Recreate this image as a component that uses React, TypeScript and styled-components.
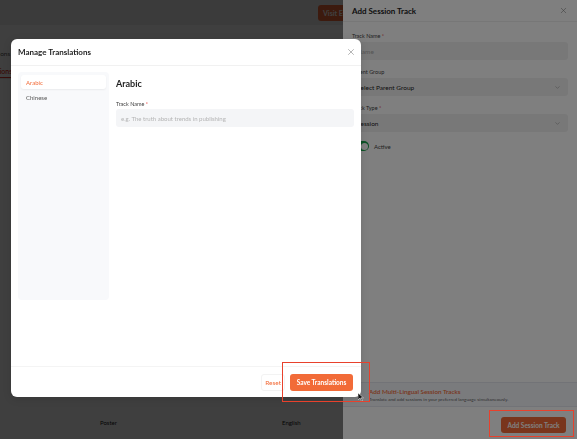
import React from 'react';
import styled, { createGlobalStyle } from 'styled-components';
import { X, ChevronDown } from 'lucide-react';

const ACCENT = '#f26b38';

const GlobalStyle = createGlobalStyle`
    html, body {
        margin: 0;
        padding: 0;
        width: 577px;
        height: 439px;
        overflow: hidden;
        font-family: Lato, "Open Sans", sans-serif;
        color: #222;
    }
    * {
        box-sizing: border-box;
    }
`;

/* ---------- page behind everything ---------- */

const Page = styled.div`
    display: flex;
    flex-direction: column;
    width: 577px;
    height: 439px;
    background: #ffffff;
`;

const TopBar = styled.div`
    display: flex;
    align-items: center;
    justify-content: flex-end;
    height: 25px;
    padding-right: 209px;
    background: #ececec;
`;

const VisitButton = styled.button`
    width: 50px;
    height: 16px;
    padding: 0 0 0 5px;
    border: none;
    border-radius: 3px;
    background: ${ACCENT};
    color: #fff;
    font-family: inherit;
    font-size: 7px;
    font-weight: 700;
    text-align: left;
    white-space: nowrap;
    overflow: hidden;
`;

const PageBody = styled.div`
    display: flex;
    flex-direction: column;
    flex: 1;
`;

const Crumb = styled.div`
    margin: 25px 0 0 -14px;
    font-size: 6.5px;
    color: #555;
`;

const Tabs = styled.div`
    display: flex;
    margin-top: 10px;
    border-bottom: 1px solid #e4e4e4;
`;

const Tab = styled.div<{ $active?: boolean }>`
    margin-left: -14px;
    padding-bottom: 2px;
    font-size: 7px;
    font-weight: 600;
    color: ${({ $active }) => ($active ? '#e23b2e' : '#666')};
    border-bottom: 1px solid ${({ $active }) => ($active ? '#e23b2e' : 'transparent')};
`;

const TableRow = styled.div`
    display: grid;
    grid-template-columns: 182px 1fr;
    align-items: center;
    height: 22px;
    margin: auto 0 6px;
    padding-left: 100px;
    font-size: 6px;
    color: #111;
`;

/* ---------- masks ---------- */

const Mask = styled.div<{ $z: number }>`
    position: fixed;
    inset: 0;
    z-index: ${({ $z }) => $z};
    background: rgba(0, 0, 0, 0.5);
`;

/* ---------- drawer ---------- */

const Drawer = styled.aside`
    position: fixed;
    top: 0;
    right: 0;
    z-index: 2;
    display: flex;
    flex-direction: column;
    width: 234px;
    height: 439px;
    background: #fff;
`;

const DrawerHeader = styled.div`
    display: flex;
    align-items: center;
    justify-content: space-between;
    height: 22px;
    padding: 0 9px;
    border-bottom: 1px solid #eeeeee;
`;

const DrawerTitle = styled.h2`
    margin: 0;
    font-size: 8px;
    font-weight: 700;
    color: #222;
`;

const CloseButton = styled.button`
    display: flex;
    padding: 0;
    border: none;
    background: transparent;
    color: #777;
`;

const DrawerBody = styled.div`
    display: flex;
    flex-direction: column;
    flex: 1;
    padding: 10px 9px 0;
`;

const Field = styled.div`
    display: flex;
    flex-direction: column;
    gap: 2px;
    margin-bottom: 8px;
`;

const Label = styled.label`
    height: 8px;
    line-height: 8px;
    font-size: 5.5px;
    color: #444;
`;

const Req = styled.span`
    color: #e53935;
`;

const DrawerInput = styled.div<{ $placeholder?: boolean }>`
    display: flex;
    align-items: center;
    justify-content: space-between;
    height: 18px;
    padding: 0 7px 0 5px;
    border-radius: 3px;
    background: #f1f1f1;
    font-size: 6.5px;
    color: ${({ $placeholder }) => ($placeholder ? '#aaa' : '#222')};
`;

const SwitchRow = styled.div`
    display: flex;
    align-items: center;
    gap: 5px;
    height: 10px;
    margin-top: 1px;
    font-size: 6px;
    color: #444;
`;

const Switch = styled.div<{ $on?: boolean }>`
    display: flex;
    align-items: center;
    justify-content: ${({ $on }) => ($on ? 'flex-end' : 'flex-start')};
    width: 17px;
    height: 10px;
    padding: 1.5px;
    border-radius: 5px;
    background: ${({ $on }) => ($on ? '#16a34a' : '#ccc')};

    &::after {
        content: '';
        width: 7px;
        height: 7px;
        border-radius: 50%;
        background: #fff;
    }
`;

const Banner = styled.div`
    display: flex;
    flex-direction: column;
    justify-content: center;
    gap: 1px;
    height: 25px;
    margin-top: auto;
    padding-left: 26px;
    border-top: 1px solid #e4e6ee;
    border-bottom: 1px solid #e4e6ee;
    background: #f5f6fb;
`;

const BannerTitle = styled.div`
    font-size: 6.3px;
    font-weight: 600;
    color: ${ACCENT};
`;

const BannerText = styled.div`
    font-size: 4.6px;
    color: #666;
`;

const DrawerFooter = styled.div`
    display: flex;
    justify-content: flex-end;
    padding: 10px 11px 6px;
`;

const PrimaryButton = styled.button<{ $w: number }>`
    width: ${({ $w }) => $w}px;
    height: 16px;
    padding: 0;
    border: none;
    border-radius: 3px;
    background: ${ACCENT};
    color: #fff;
    font-family: inherit;
    font-size: 6.5px;
    font-weight: 700;
    white-space: nowrap;
`;

/* ---------- translations modal ---------- */

const Modal = styled.div`
    position: fixed;
    top: 39px;
    left: 11px;
    z-index: 4;
    display: flex;
    flex-direction: column;
    width: 350px;
    height: 358px;
    border-radius: 6px;
    background: #fff;
    box-shadow: 0 2px 8px rgba(0, 0, 0, 0.12);
`;

const ModalHeader = styled.div`
    display: flex;
    align-items: center;
    justify-content: space-between;
    height: 27px;
    padding: 0 5px 0 7px;
    border-bottom: 1px solid #f1f1f1;
`;

const ModalTitle = styled.h2`
    margin: 0;
    font-size: 8px;
    font-weight: 700;
    color: #1f1f1f;
`;

const ModalBody = styled.div`
    display: flex;
    gap: 7px;
    flex: 1;
    padding: 6px 7px;
`;

const LangList = styled.nav`
    display: flex;
    flex-direction: column;
    gap: 1px;
    width: 91px;
    height: 228px;
    padding: 3px;
    border-radius: 4px;
    background: #f8f9fb;
`;

const LangItem = styled.div<{ $active?: boolean }>`
    display: flex;
    align-items: center;
    height: 14px;
    padding-left: 5px;
    border-radius: 3px;
    background: ${({ $active }) => ($active ? '#fff' : 'transparent')};
    box-shadow: ${({ $active }) => ($active ? '0 1px 2px rgba(0, 0, 0, 0.06)' : 'none')};
    font-size: 6px;
    color: ${({ $active }) => ($active ? ACCENT : '#555')};
`;

const Content = styled.section`
    display: flex;
    flex-direction: column;
    flex: 1;
`;

const Heading = styled.h3`
    margin: 5px 0 0;
    height: 14px;
    line-height: 14px;
    font-size: 9px;
    font-weight: 700;
    color: #1f1f1f;
`;

const ContentLabel = styled(Label)`
    margin-top: 9px;
`;

const TextInput = styled.input`
    height: 18px;
    margin-top: 1px;
    padding: 0 5px;
    border: none;
    border-radius: 3px;
    outline: none;
    background: #f4f5f7;
    font-family: inherit;
    font-size: 6px;
    color: #222;

    &::placeholder {
        color: #b4b4b4;
    }
`;

const ModalFooter = styled.div`
    display: flex;
    align-items: center;
    justify-content: flex-end;
    gap: 5px;
    height: 31px;
    padding: 0 8px 0 0;
    border-top: 1px solid #f4f4f4;
`;

const GhostButton = styled.button`
    height: 17px;
    padding: 0 3px;
    border: 1px solid #f3f3f3;
    border-radius: 3px;
    background: #fff;
    color: ${ACCENT};
    font-family: inherit;
    font-size: 6.5px;
`;

const SaveButton = styled(PrimaryButton)`
    height: 17px;
`;

/* ---------- annotation marks ---------- */

const Highlight = styled.div<{ $x: number; $y: number; $w: number; $h: number }>`
    position: fixed;
    left: ${({ $x }) => $x}px;
    top: ${({ $y }) => $y}px;
    z-index: 6;
    width: ${({ $w }) => $w}px;
    height: ${({ $h }) => $h}px;
    border: 1.5px solid #e8412c;
    pointer-events: none;
`;

const Cursor = styled.svg`
    position: fixed;
    left: 358px;
    top: 393px;
    z-index: 5;
`;

const App = () => {
    return (
        <>
            <GlobalStyle />
            <Page>
                <TopBar>
                    <VisitButton>Visit Event</VisitButton>
                </TopBar>
                <PageBody>
                    <Crumb>Sessions</Crumb>
                    <Tabs>
                        <Tab $active>Sessions</Tab>
                    </Tabs>
                    <TableRow>
                        <span>Poster</span>
                        <span>English</span>
                    </TableRow>
                </PageBody>
            </Page>

            <Mask $z={1} />

            <Drawer>
                <DrawerHeader>
                    <DrawerTitle>Add Session Track</DrawerTitle>
                    <CloseButton aria-label="Close"><X size={9} strokeWidth={1.4} /></CloseButton>
                </DrawerHeader>
                <DrawerBody>
                    <Field>
                        <Label>Track Name <Req>*</Req></Label>
                        <DrawerInput $placeholder>Name</DrawerInput>
                    </Field>
                    <Field>
                        <Label>Parent Group</Label>
                        <DrawerInput>
                            Select Parent Group
                            <ChevronDown size={7} color="#999" />
                        </DrawerInput>
                    </Field>
                    <Field>
                        <Label>Track Type <Req>*</Req></Label>
                        <DrawerInput>
                            Session
                            <ChevronDown size={7} color="#999" />
                        </DrawerInput>
                    </Field>
                    <SwitchRow>
                        <Switch $on />
                        Active
                    </SwitchRow>
                </DrawerBody>
                <Banner>
                    <BannerTitle>Add Multi-Lingual Session Tracks</BannerTitle>
                    <BannerText>Translate and add sessions in your preferred language simultaneously.</BannerText>
                </Banner>
                <DrawerFooter>
                    <PrimaryButton $w={65}>Add Session Track</PrimaryButton>
                </DrawerFooter>
            </Drawer>

            <Mask $z={3} />

            <Modal>
                <ModalHeader>
                    <ModalTitle>Manage Translations</ModalTitle>
                    <CloseButton aria-label="Close"><X size={10} strokeWidth={1.3} /></CloseButton>
                </ModalHeader>
                <ModalBody>
                    <LangList>
                        <LangItem $active>Arabic</LangItem>
                        <LangItem>Chinese</LangItem>
                    </LangList>
                    <Content>
                        <Heading>Arabic</Heading>
                        <ContentLabel>Track Name <Req>*</Req></ContentLabel>
                        <TextInput placeholder="e.g. The truth about trends in publishing" />
                    </Content>
                </ModalBody>
                <ModalFooter>
                    <GhostButton>Reset</GhostButton>
                    <SaveButton $w={63}>Save Translations</SaveButton>
                </ModalFooter>
            </Modal>

            <Cursor width="6" height="8" viewBox="0 0 6 8">
                <path d="M0 0 L0 7 L2 5 L3.5 8 L4.5 7.5 L3 4.8 L5.5 4.8 Z" fill="#111" stroke="#fff" strokeWidth="0.5" />
            </Cursor>

            <Highlight $x={282} $y={362} $w={88} $h={40} />
            <Highlight $x={489} $y={410} $w={85} $h={27} />
        </>
    );
};

export default App;
